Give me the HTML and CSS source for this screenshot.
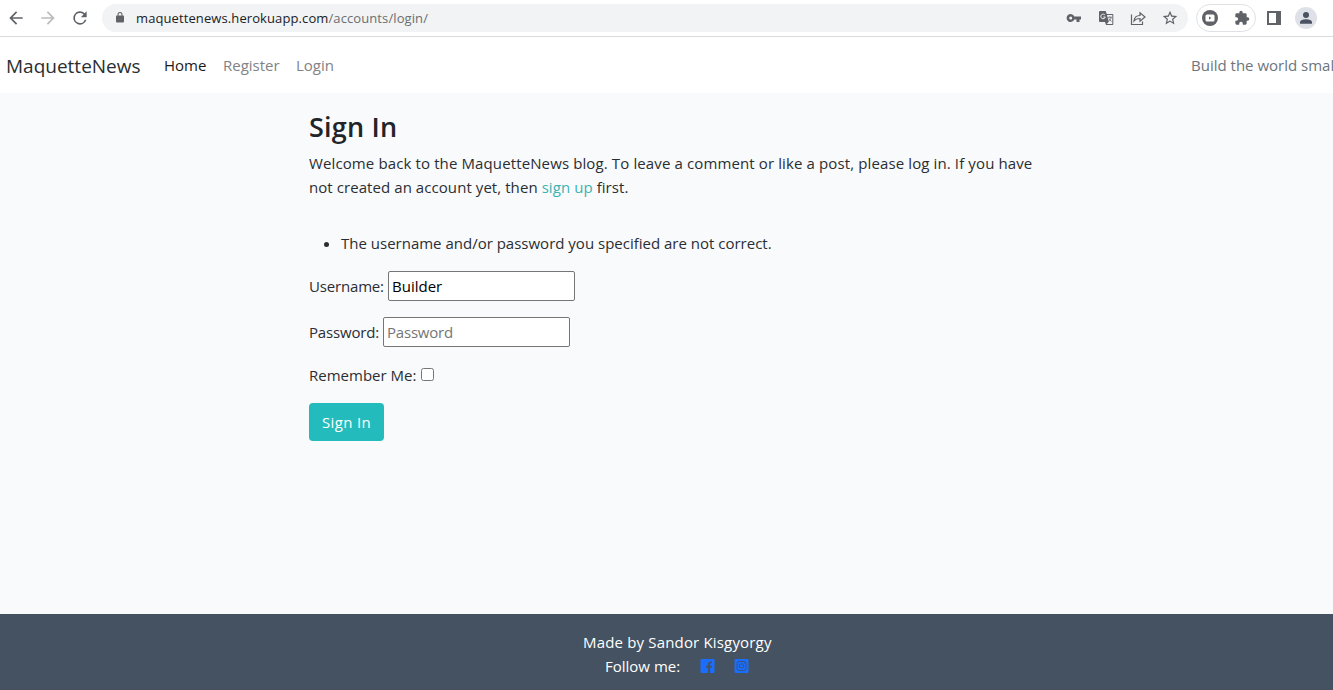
FILE: index.html
```html
<!DOCTYPE html>
<html lang="en">
<head>
<meta charset="utf-8">
<title>MaquetteNews</title>
<link rel="stylesheet" href="styles.css">
</head>
<body>
<div class="toolbar">
  <div class="nav-buttons">
    <svg class="icon" viewBox="0 0 24 24"><path d="M20 11H7.8l5.6-5.6L12 4l-8 8 8 8 1.4-1.4L7.8 13H20z"/></svg>
    <svg class="icon icon-off" viewBox="0 0 24 24"><path d="M12 4l-1.4 1.4 5.6 5.6H4v2h12.200l-5.600 5.600L12 20l8-8z"/></svg>
    <svg class="icon" viewBox="0 0 24 24"><path d="M17.650 6.350A8 8 0 1 0 19.730 14h-2.080A6 6 0 1 1 12 6c1.660 0 3.140.690 4.220 1.780L13 11h7V4z"/></svg>
  </div>
  <div class="omnibox">
    <svg class="lock" viewBox="0 0 24 24"><path d="M18 8h-1V6A5 5 0 0 0 7 6v2H6a2 2 0 0 0-2 2v10a2 2 0 0 0 2 2h12a2 2 0 0 0 2-2V10a2 2 0 0 0-2-2zM9 6a3 3 0 0 1 6 0v2H9z"/></svg>
    <span class="url"><span class="host">maquettenews.herokuapp.com</span>/accounts/login/</span>
    <div class="actions">
      <svg viewBox="0 0 16 16"><path fill-rule="evenodd" d="M8.300 6.500A4 4 0 1 0 8.300 9.500H10.500V12H13.500V9.500H15V6.500zM4.700 6.500a1.500 1.500 0 1 1 0 3 1.500 1.500 0 0 1 0-3z"/></svg>
      <svg viewBox="0 0 16 16"><path d="M2 1h5.700l1 3H14.500A.8.800 0 0 1 15.300 4.800V14.300a.8.800 0 0 1-.8.800H8l-1-3H2a1 1 0 0 1-1-1V2a1 1 0 0 1 1-1z"/><path fill="#f1f3f4" d="M9 5H14.300v9.100H8.800l2-2.300z"/><path class="line light" d="M7 5.200A2.300 2.300 0 1 0 7.300 7H5.300"/><path class="line thin" d="M10 7.300h4M12 6.300v1M13.200 7.500c-.4 1.700-1.500 2.800-2.700 3.500M11 8.500l2.400 3"/></svg>
      <svg viewBox="0 0 16 16"><path class="line" d="M1.500 4.500v10h11v-3M4 11c.4-4 2.300-5.500 6-5.500V2.800L15 7l-5 4.200V8.500C7 8.500 5.400 9.200 4 11z"/></svg>
      <svg viewBox="1 1 22 22"><path d="M22 9.240l-7.190-.62L12 2 9.190 8.630 2 9.240l5.460 4.730L5.820 21 12 17.270 18.180 21l-1.630-7.030zM12 15.400l-3.760 2.270 1-4.280-3.320-2.880 4.380-.38L12 6.100l1.710 4.040 4.380.38-3.320 2.880 1 4.280z"/></svg>
    </div>
  </div>
  <div class="extensions">
    <svg viewBox="0 0 16 16"><circle cx="8" cy="8" r="8"/><rect x="3.500" y="4.500" width="9" height="7" rx="1.500" fill="#fff"/><path d="M7 6.500v3l2.300-1.500z"/></svg>
    <svg class="puzzle" viewBox="0 0 24 24"><path d="M20.500 11H19V7a2 2 0 0 0-2-2h-4V3.500a2.500 2.500 0 0 0-5 0V5H4a2 2 0 0 0-2 2v3.800h1.500a2.700 2.700 0 0 1 0 5.400H2V20a2 2 0 0 0 2 2h3.800v-1.500a2.700 2.700 0 0 1 5.400 0V22H17a2 2 0 0 0 2-2v-4h1.500a2.500 2.500 0 0 0 0-5z"/></svg>
  </div>
  <svg class="panel" viewBox="0 0 14 14"><path fill-rule="evenodd" d="M0 0h14v14H0zM2 2v10h7V2z"/></svg>
  <svg class="avatar" viewBox="0 0 22 22"><circle cx="11" cy="11" r="11" fill="#dee1e7"/><circle cx="11" cy="8" r="3"/><path d="M5 16.700v-1.500C5 13 9 12.200 11 12.200s6 .8 6 3v1.500z"/></svg>
</div>
<nav class="navbar">
  <a class="brand">MaquetteNews</a>
  <a class="nav-link active home">Home</a>
  <a class="nav-link register">Register</a>
  <a class="nav-link login">Login</a>
  <span class="tagline">Build the world smal</span>
</nav>
<main class="content">
  <h1>Sign In</h1>
  <p class="intro"><span class="intro-a">Welcome back to the MaquetteNews blog. To leave a comment or like a post, please log in. If you have</span><br><span class="intro-b">not created an account yet, then <a class="signup">sign up</a> first.</span></p>
  <form>
    <ul class="errors"><li>The username and/or password you specified are not correct.</li></ul>
    <div class="field"><label class="l-user" for="u">Username:</label><input id="u" type="text" value="Builder"></div>
    <div class="field"><label class="l-pass" for="p">Password:</label><input id="p" type="password" placeholder="Password"></div>
    <div class="remember"><label class="l-rem" for="r">Remember Me:</label><input id="r" type="checkbox"></div>
    <button type="button">Sign In</button>
  </form>
</main>
<footer>
  <div class="made">Made by Sandor Kisgyorgy</div>
  <div class="follow"><span>Follow me:</span>
    <svg viewBox="0 0 14 14"><rect width="14" height="14" rx="1" fill="#1a6dfd"/><path fill="#445261" d="M7.400 14V8.800H5.600V6.700h1.800V5.200c0-1.900 1-2.800 2.700-2.800h1.400v1.900h-1c-.8 0-1.100.4-1.100 1.100v1.300h2l-.3 2.100H9.400V14z"/></svg>
    <svg viewBox="0 0 14 14"><rect width="14" height="14" rx="1" fill="#1a6dfd"/><g fill="none" stroke="#34547f"><rect x="2.500" y="2.500" width="9" height="9" rx="2"/><circle cx="7" cy="7" r="2.200"/></g><circle cx="10" cy="4" r=".6" fill="#34547f"/></svg>
  </div>
</footer>
</body>
</html>
```
FILE: styles.css
```css
* { box-sizing: border-box; }
body {
  margin: 0;
  height: 690px;
  overflow: hidden;
  display: flex;
  flex-direction: column;
  background: #f9fafc;
  color: #2a2e32;
  font: 400 15px/24px "Open Sans", "Noto Sans", sans-serif;
}
svg { display: block; flex: none; fill: #5f6368; }
.line { fill: none; stroke: #5f6368; stroke-width: 1.2; }
.light { stroke: #f1f3f4; stroke-width: 1; }
.thin { stroke-width: .8; }
.toolbar { height: 37px; flex: none; display: flex; align-items: center; padding: 0 16px 1px 6px; background: #fff; border-bottom: 1px solid #d9dbdd; }
.nav-buttons { display: flex; gap: 12px; width: 96px; }
.icon { width: 20px; height: 20px; }
.icon-off { fill: #babcbe; }
.omnibox { width: 1086px; height: 28px; border-radius: 14px; background: #f1f3f4; display: flex; align-items: center; padding: 0 10px 0 12px; }
.lock { width: 12px; height: 13px; margin-right: 10px; }
.url { font-size: 13px; letter-spacing: .1px; color: #6b6e72; white-space: nowrap; }
.host { color: #202124; }
.actions { margin-left: auto; display: flex; gap: 16px; }
.actions svg { width: 16px; height: 16px; }
.extensions { width: 60px; height: 28px; margin-left: 8px; border: 1px solid #dfe1e4; border-radius: 14px; display: flex; align-items: center; justify-content: space-between; padding: 0 5px; }
.extensions svg { width: 16px; height: 16px; }
.panel { width: 14px; height: 14px; margin-left: 11px; }
.avatar { width: 22px; height: 22px; margin-left: 14px; fill: #4a5263; }
.navbar { height: 56px; flex: none; display: flex; align-items: center; background: #fff; padding-left: 6px; white-space: nowrap; }
.brand { font-size: 19px; width: 158px; padding-top: 1px; }
.nav-link { color: #808285; }
.active { color: #1a1a1a; }
.home { width: 59px; }
.register { width: 73px; }
.tagline { margin-left: auto; width: 142px; color: #6c757d; }
.content { flex: 1; padding: 17px 0 0 309px; white-space: nowrap; }
h1 { margin: 0 0 7px; font-size: 27px; line-height: 34px; font-weight: 600; letter-spacing: .2px; color: #212529; }
p { margin: 0; }
.intro-a { letter-spacing: .12px; }
.intro-b { letter-spacing: .07px; }
.signup { color: #3bb3b1; }
.errors { margin: 32px 0 16px; padding-left: 32px; }
.field { height: 30px; margin-bottom: 16px; display: flex; align-items: center; gap: 4px; }
.field input { width: 187px; height: 30px; padding: 1px 3px; border: 1px solid #767676; border-radius: 2px; background: #fff; color: #000; font: inherit; }
.field input::placeholder { color: #757575; letter-spacing: -.2px; }
.remember { height: 24px; display: flex; align-items: center; gap: 4px; }
.remember input { width: 13px; height: 13px; margin: 0 0 1px; }
.l-user, .l-pass { letter-spacing: -.17px; }
.l-user { width: 75px; }
.l-pass { width: 70px; }
.l-rem { width: 108px; }
button { display: block; margin-top: 16px; width: 75px; height: 38px; padding: 0; border: 0; border-radius: 4px; background: #24bbbc; color: #fff; font: inherit; letter-spacing: .35px; }
footer { height: 76px; flex: none; padding-top: 16px; background: #445261; border-bottom: 1px solid #4a4f60; color: #fff; white-space: nowrap; }
.made { padding-left: 583px; letter-spacing: .17px; }
.follow { display: flex; align-items: center; padding-left: 605px; }
.follow span { width: 95px; }
.follow svg { width: 15px; height: 14px; margin-right: 19px; }
```
